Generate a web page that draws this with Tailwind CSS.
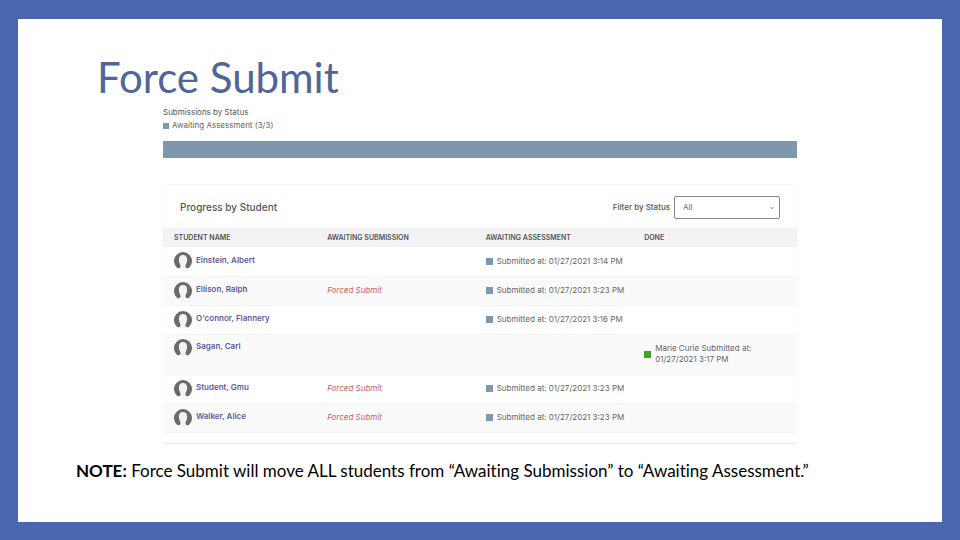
<!DOCTYPE html>
<html lang="en">
<head>
    <meta charset="UTF-8">
    <meta name="viewport" content="width=device-width, initial-scale=1.0">
    <title>Force Submit</title>
    <script src="https://cdn.jsdelivr.net/npm/@tailwindcss/browser@4"></script>
</head>
<body class="bg-[#4a66ac]">
    <!-- Avatar shared by every student row -->
    <svg class="hidden" aria-hidden="true">
        <symbol id="avatar" viewBox="0 0 18 18">
            <circle cx="9" cy="9" r="9" fill="#f3f3f4"/>
            <path d="M3.2 16A9 9 0 1 1 14.8 16C13.8 16.600 12.300 16.300 11.700 15.300C11.300 14.300 11.500 13.300 12 12.300C12.700 10.800 13.200 9.200 13.100 7.200C13 4.400 11.500 2.900 9 2.900C6.500 2.900 5 4.400 4.900 7.200C4.800 9.200 5.300 10.800 6 12.300C6.500 13.300 6.700 14.300 6.300 15.300C5.700 16.300 4.200 16.600 3.200 16Z" fill="#6b6b6b"/>
        </symbol>
    </svg>

    <main class="min-h-screen border-18 border-t-19 border-[#4a66ac] bg-white flex flex-col">
        <h1 class="pt-[34px] pl-[79px] font-['Lato','Open_Sans',sans-serif] text-[42px] leading-12 text-[#4e6699]">Force Submit</h1>

        <section class="mx-[145px] pt-1 font-['Inter',sans-serif] text-[8px] leading-[13px] text-[#666]">
            <h2 class="pt-px text-[#555]">Submissions by Status</h2>
            <p class="flex items-center gap-[3px]"><span class="size-[6px] bg-[#7f97ad]"></span>Awaiting Assessment (3/3)</p>
            <div class="mt-[9px] h-[17px] bg-[#7f97ad]"></div>

            <div class="mt-[27px] border-b border-[#ececee] shadow-[0_0_2px_rgba(0,0,0,0.1)] rounded-xs pb-[10px]">
                <div class="flex h-[43px] items-center justify-between px-[17px] pt-[2px]">
                    <h3 class="text-[10px] font-medium text-[#555]">Progress by Student</h3>
                    <div class="flex items-center gap-1">
                        <label for="status" class="font-medium text-[#555]">Filter by Status</label>
                        <div class="relative">
                            <select id="status" class="h-[23px] w-[106px] appearance-none rounded-xs border border-[#888] bg-white pl-2 text-[8px] text-[#6a63a0]">
                                <option>All</option>
                                <option>Awaiting Submission</option>
                                <option>Awaiting Assessment</option>
                                <option>Done</option>
                            </select>
                            <svg class="pointer-events-none absolute right-[6px] top-[10px] size-1" viewBox="0 0 4 4" fill="none" stroke="#777" stroke-width="0.9"><path d="M0.300 1.200L2 2.700L3.700 1.200"/></svg>
                        </div>
                    </div>
                </div>

                <table class="w-full table-fixed text-left">
                    <thead class="bg-[#f3f3f6] text-[7px] text-[#555]">
                        <tr class="h-[19px]">
                            <th class="w-[24%] pl-[11px] font-semibold">STUDENT NAME</th>
                            <th class="w-[25%] pl-3 font-semibold">AWAITING SUBMISSION</th>
                            <th class="w-[25%] pl-3 font-semibold">AWAITING ASSESSMENT</th>
                            <th class="w-[26%] pl-3 font-semibold">DONE</th>
                        </tr>
                    </thead>
                    <tbody>
                        <tr class="h-[29px]">
                            <td class="pl-[11px]"><a href="#" class="flex items-center gap-1 font-semibold text-[#5f5a9c]"><svg class="size-[18px]"><use href="#avatar"/></svg><span class="pb-[2px]">Einstein, Albert</span></a></td>
                            <td></td>
                            <td class="pl-3"><div class="flex items-center gap-1"><span class="size-[7px] bg-[#7f97ad]"></span>Submitted at: 01/27/2021 3:14 PM</div></td>
                            <td></td>
                        </tr>
                        <tr class="h-[29px] bg-[#fafafa] border-y border-[#f4f4f4]">
                            <td class="pl-[11px]"><a href="#" class="flex items-center gap-1 font-semibold text-[#5f5a9c]"><svg class="size-[18px]"><use href="#avatar"/></svg><span class="pb-[2px]">Ellison, Ralph</span></a></td>
                            <td class="pl-3 italic text-[#c9615b]">Forced Submit</td>
                            <td class="pl-3"><div class="flex items-center gap-1"><span class="size-[7px] bg-[#7f97ad]"></span>Submitted at: 01/27/2021 3:23 PM</div></td>
                            <td></td>
                        </tr>
                        <tr class="h-[29px]">
                            <td class="pl-[11px]"><a href="#" class="flex items-center gap-1 font-semibold text-[#5f5a9c]"><svg class="size-[18px]"><use href="#avatar"/></svg><span class="pb-[2px]">O'connor, Flannery</span></a></td>
                            <td></td>
                            <td class="pl-3"><div class="flex items-center gap-1"><span class="size-[7px] bg-[#7f97ad]"></span>Submitted at: 01/27/2021 3:16 PM</div></td>
                            <td></td>
                        </tr>
                        <tr class="h-10 bg-[#fafafa] border-y border-[#f4f4f4]">
                            <td class="pl-[11px] pt-1 align-top"><a href="#" class="flex items-center gap-1 font-semibold text-[#5f5a9c]"><svg class="size-[18px]"><use href="#avatar"/></svg><span class="pb-[2px]">Sagan, Carl</span></a></td>
                            <td></td>
                            <td></td>
                            <td class="pl-3"><div class="flex items-center gap-1 leading-[11px]"><span class="size-[7px] bg-[#3fa32a]"></span><span>Marie Curie Submitted at:<br>01/27/2021 3:17 PM</span></div></td>
                        </tr>
                        <tr class="h-[29px]">
                            <td class="pl-[11px]"><a href="#" class="flex items-center gap-1 font-semibold text-[#5f5a9c]"><svg class="size-[18px]"><use href="#avatar"/></svg><span class="pb-[2px]">Student, Gmu</span></a></td>
                            <td class="pl-3 italic text-[#c9615b]">Forced Submit</td>
                            <td class="pl-3"><div class="flex items-center gap-1"><span class="size-[7px] bg-[#7f97ad]"></span>Submitted at: 01/27/2021 3:23 PM</div></td>
                            <td></td>
                        </tr>
                        <tr class="h-[29px] bg-[#fafafa] border-y border-[#f4f4f4]">
                            <td class="pl-[11px]"><a href="#" class="flex items-center gap-1 font-semibold text-[#5f5a9c]"><svg class="size-[18px]"><use href="#avatar"/></svg><span class="pb-[2px]">Walker, Alice</span></a></td>
                            <td class="pl-3 italic text-[#c9615b]">Forced Submit</td>
                            <td class="pl-3"><div class="flex items-center gap-1"><span class="size-[7px] bg-[#7f97ad]"></span>Submitted at: 01/27/2021 3:23 PM</div></td>
                            <td></td>
                        </tr>
                    </tbody>
                </table>
            </div>
        </section>

        <p class="px-[58px] pt-[15px] font-['Lato','Open_Sans',sans-serif] text-[17px] leading-6 text-black [font-variant-ligatures:none]"><strong>NOTE:</strong> Force Submit will move ALL students from “Awaiting Submission” to “Awaiting Assessment.”</p>
    </main>
</body>
</html>
